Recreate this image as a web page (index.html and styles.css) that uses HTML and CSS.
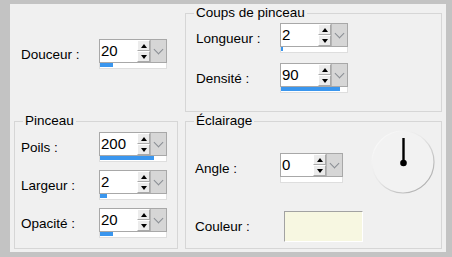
FILE: index.html
```html
<!DOCTYPE html>
<html lang="fr">
<head>
  <meta charset="UTF-8">
  <title>Pinceau</title>
  <link rel="stylesheet" href="styles.css">
</head>
<body>
  <div class="panel">
    <div class="free">
      <div class="row">
        <span class="lbl">Douceur :</span>
        <div class="spin">
          <div class="spin-top"><span class="spin-val">20</span><span class="arrows"><span class="arr up"></span><span class="arr down"></span></span><span class="drop"></span></div>
          <div class="bar"><span class="fill" style="width: 20%"></span></div>
        </div>
      </div>
    </div>

    <fieldset class="group strokes">
      <legend>Coups de pinceau</legend>
      <div class="group-body">
        <div class="row">
          <span class="lbl">Longueur :</span>
          <div class="spin">
            <div class="spin-top"><span class="spin-val">2</span><span class="arrows"><span class="arr up"></span><span class="arr down"></span></span><span class="drop"></span></div>
            <div class="bar"><span class="fill" style="width: 3%"></span></div>
          </div>
        </div>
        <div class="row">
          <span class="lbl">Densité :</span>
          <div class="spin">
            <div class="spin-top"><span class="spin-val">90</span><span class="arrows"><span class="arr up"></span><span class="arr down"></span></span><span class="drop"></span></div>
            <div class="bar"><span class="fill" style="width: 90%"></span></div>
          </div>
        </div>
      </div>
    </fieldset>

    <fieldset class="group brush">
      <legend>Pinceau</legend>
      <div class="group-body">
        <div class="row">
          <span class="lbl">Poils :</span>
          <div class="spin">
            <div class="spin-top"><span class="spin-val">200</span><span class="arrows"><span class="arr up"></span><span class="arr down"></span></span><span class="drop"></span></div>
            <div class="bar"><span class="fill" style="width: 82%"></span></div>
          </div>
        </div>
        <div class="row">
          <span class="lbl">Largeur :</span>
          <div class="spin">
            <div class="spin-top"><span class="spin-val">2</span><span class="arrows"><span class="arr up"></span><span class="arr down"></span></span><span class="drop"></span></div>
            <div class="bar"><span class="fill" style="width: 10%"></span></div>
          </div>
        </div>
        <div class="row">
          <span class="lbl">Opacité :</span>
          <div class="spin">
            <div class="spin-top"><span class="spin-val">20</span><span class="arrows"><span class="arr up"></span><span class="arr down"></span></span><span class="drop"></span></div>
            <div class="bar"><span class="fill" style="width: 20%"></span></div>
          </div>
        </div>
      </div>
    </fieldset>

    <fieldset class="group light">
      <legend>Éclairage</legend>
      <div class="group-body">
        <div class="light-rows">
          <div class="row">
            <span class="lbl">Angle :</span>
            <div class="spin narrow">
              <div class="spin-top"><span class="spin-val">0</span><span class="arrows"><span class="arr up"></span><span class="arr down"></span></span><span class="drop"></span></div>
              <div class="bar"><span class="fill" style="width: 0%"></span></div>
            </div>
          </div>
          <div class="row color-row">
            <span class="lbl">Couleur :</span>
            <span class="swatch"></span>
          </div>
        </div>
        <svg class="dial" width="64" height="64" viewBox="0 0 64 64">
          <defs>
            <linearGradient id="ring" x1="0" y1="0" x2="1" y2="1">
              <stop offset="0" stop-color="#ffffff"/>
              <stop offset="0.45" stop-color="#e8e8e8"/>
              <stop offset="1" stop-color="#9e9e9e"/>
            </linearGradient>
          </defs>
          <circle cx="32" cy="32" r="31" fill="#f2f2f2" stroke="url(#ring)" stroke-width="1.2"/>
          <line x1="32.5" y1="8" x2="32.5" y2="33" stroke="#000" stroke-width="2.4"/>
          <circle cx="32.5" cy="33" r="3.3" fill="#000"/>
        </svg>
      </div>
    </fieldset>
  </div>
</body>
</html>
```

FILE: styles.css
```css
body {
  margin: 0;
  background-color: #c3c3c3;
  font-family: "Liberation Sans", Arial, sans-serif;
  font-size: 13.5px;
  color: #000;
}

.panel {
  box-sizing: border-box;
  margin: 4px 0 0 10px;
  width: 436px;
  height: 248px;
  padding: 1px 4px 0 4px;
  background-color: #f0f0f0;
  display: grid;
  grid-template-columns: 164px 257px;
  grid-template-rows: 107px 136px;
  column-gap: 7px;
  row-gap: 1px;
}

.group {
  margin: 0;
  padding: 0;
  min-width: 0;
  border: 1px solid #d6d6d6;
  box-sizing: border-box;
}

.group legend {
  margin-left: 8px;
  padding: 0 2px;
  line-height: 16px;
}

.row {
  display: flex;
  align-items: center;
}

.lbl {
  flex: none;
  width: 78px;
}

.free {
  padding: 34px 0 0 7px;
}

.strokes .group-body {
  padding: 2px 0 0 10px;
}

.strokes .lbl {
  width: 84px;
}

.strokes .row + .row {
  margin-top: 10px;
}

.brush .group-body {
  padding: 3px 0 0 6px;
}

.brush .row + .row {
  margin-top: 8px;
}

.light .group-body {
  display: flex;
  padding-left: 9px;
}

.light .lbl {
  width: 85px;
}

.light-rows {
  flex: 1;
  padding-top: 24px;
}

.color-row {
  margin-top: 28px;
}

.swatch {
  box-sizing: border-box;
  width: 79px;
  height: 31px;
  margin-left: 4px;
  background-color: #f7f7e1;
  border: 1px solid;
  border-color: #a2a2a2 #ffffff #ffffff #a2a2a2;
}

.dial {
  flex: none;
  margin: 1px 6px 0 0;
}

/* spin box with its slider bar */
.spin {
  width: 68px;
  height: 30px;
  display: flex;
  flex-direction: column;
}

.spin.narrow {
  width: 63px;
}

.spin-top {
  box-sizing: border-box;
  height: 24px;
  display: flex;
  border: 1px solid #a8a8a8;
  background-color: #fff;
}

.spin-val {
  flex: 1;
  font-size: 15px;
  line-height: 22px;
  padding-left: 1px;
}

.arrows {
  width: 13px;
  display: flex;
  flex-direction: column;
}

.arr {
  box-sizing: border-box;
  flex: 1;
  display: flex;
  align-items: center;
  justify-content: center;
  background-color: #ececec;
  border: 1px solid;
  border-color: #ffffff #a9a9a9 #a9a9a9 #ffffff;
}

.arr::before {
  content: "";
  border-left: 3.5px solid transparent;
  border-right: 3.5px solid transparent;
}

.arr.up::before {
  border-bottom: 4px solid #000;
}

.arr.down::before {
  border-top: 4px solid #000;
}

.drop {
  width: 15px;
  background-color: #d6d6d6;
  border-left: 1px solid #b5b5b5;
  display: flex;
  align-items: center;
  justify-content: center;
}

.drop::before {
  content: "";
  width: 6px;
  height: 6px;
  margin-top: -4px;
  border-right: 1px solid #8a8e94;
  border-bottom: 1px solid #8a8e94;
  transform: rotate(45deg);
}

.bar {
  box-sizing: border-box;
  height: 6px;
  border: 1px solid #dedede;
  border-top: none;
  background-color: #fff;
}

.fill {
  display: block;
  height: 4px;
  background-color: #3a96ee;
}
```
